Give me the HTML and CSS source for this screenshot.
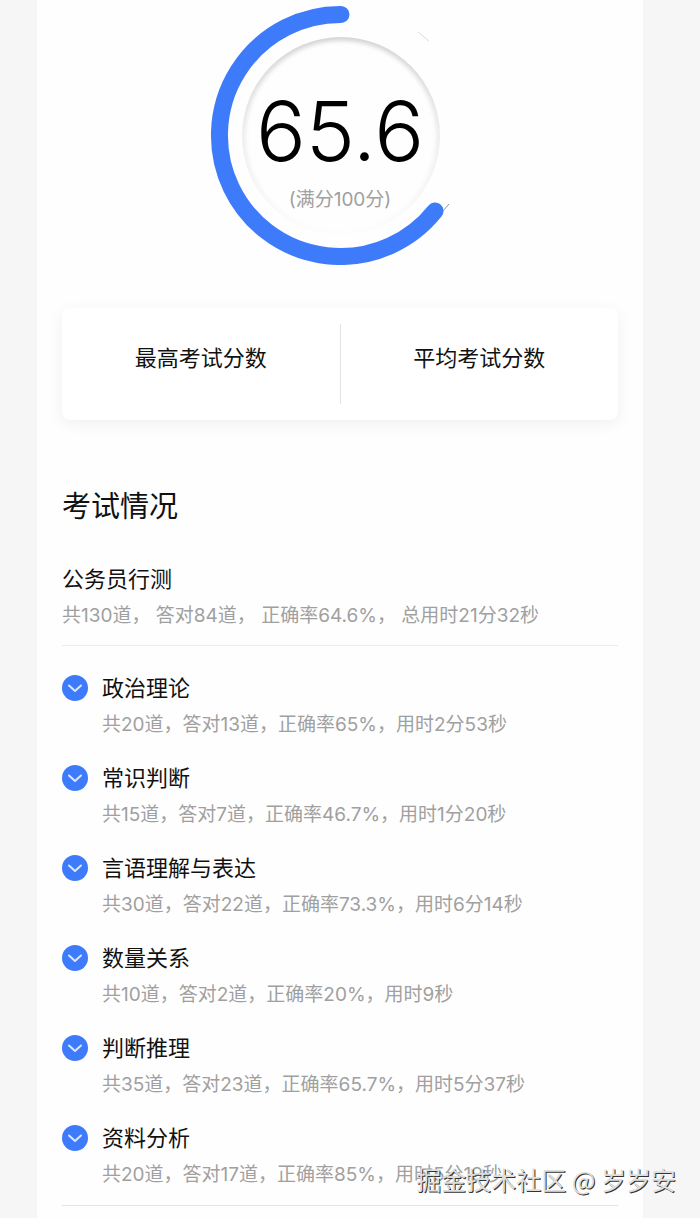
FILE: index.html
```
<!DOCTYPE html>
<html lang="zh-CN">
<head>
    <meta charset="UTF-8">
    <meta name="viewport" content="width=device-width, initial-scale=1.0">
    <title>考试情况</title>
    <link rel="stylesheet" href="styles.css">
</head>
<body>
<main class="sheet">
    <section class="gauge">
        <svg class="gauge-ring" viewBox="0 0 260 260" aria-hidden="true">
            <defs>
                <linearGradient id="rim" x1="0" y1="0" x2="0" y2="1">
                    <stop offset="0" stop-color="#d2d2d5"/>
                    <stop offset="0.5" stop-color="#ececed"/>
                    <stop offset="1" stop-color="#fdfdfd"/>
                </linearGradient>
                <filter id="soft" x="-10%" y="-10%" width="120%" height="120%">
                    <feGaussianBlur stdDeviation="2"/>
                </filter>
                <clipPath id="dial">
                    <circle cx="131" cy="131" r="99"/>
                </clipPath>
            </defs>
            <g clip-path="url(#dial)">
                <circle cx="131" cy="131" r="99" fill="none" stroke="url(#rim)" stroke-width="7" filter="url(#soft)"/>
            </g>
            <path d="M131 9.500A121 121 0 1 0 225 206" fill="none" stroke="#3d7bfb" stroke-width="17" stroke-linecap="round"/>
            <path d="M233 206l6-7" stroke="#8d95a3" stroke-width="1"/>
            <path d="M208 27l11 9" stroke="#dcdcdc" stroke-width="1"/>
        </svg>
        <div class="gauge-text">
            <div class="score">65.6</div>
            <div class="full-score">(满分100分)</div>
        </div>
    </section>

    <section class="summary">
        <div class="summary-item">最高考试分数</div>
        <div class="summary-item">平均考试分数</div>
    </section>

    <section class="result">
        <h1>考试情况</h1>
        <div class="subject">
            <h2>公务员行测</h2>
            <p>共130道， 答对84道， 正确率64.6%， 总用时21分32秒</p>
        </div>
        <ul class="modules">
            <li>
                <button class="toggle" aria-label="展开政治理论"><svg viewBox="0 0 26 26"><path d="M7 10.500l6 5.500 6-5.500"/></svg></button>
                <div>
                    <h2>政治理论</h2>
                    <p>共20道，答对13道，正确率65%，用时2分53秒</p>
                </div>
            </li>
            <li>
                <button class="toggle" aria-label="展开常识判断"><svg viewBox="0 0 26 26"><path d="M7 10.500l6 5.500 6-5.500"/></svg></button>
                <div>
                    <h2>常识判断</h2>
                    <p>共15道，答对7道，正确率46.7%，用时1分20秒</p>
                </div>
            </li>
            <li>
                <button class="toggle" aria-label="展开言语理解与表达"><svg viewBox="0 0 26 26"><path d="M7 10.500l6 5.500 6-5.500"/></svg></button>
                <div>
                    <h2>言语理解与表达</h2>
                    <p>共30道，答对22道，正确率73.3%，用时6分14秒</p>
                </div>
            </li>
            <li>
                <button class="toggle" aria-label="展开数量关系"><svg viewBox="0 0 26 26"><path d="M7 10.500l6 5.500 6-5.500"/></svg></button>
                <div>
                    <h2>数量关系</h2>
                    <p>共10道，答对2道，正确率20%，用时9秒</p>
                </div>
            </li>
            <li>
                <button class="toggle" aria-label="展开判断推理"><svg viewBox="0 0 26 26"><path d="M7 10.500l6 5.500 6-5.500"/></svg></button>
                <div>
                    <h2>判断推理</h2>
                    <p>共35道，答对23道，正确率65.7%，用时5分37秒</p>
                </div>
            </li>
            <li>
                <button class="toggle" aria-label="展开资料分析"><svg viewBox="0 0 26 26"><path d="M7 10.500l6 5.500 6-5.500"/></svg></button>
                <div>
                    <h2>资料分析</h2>
                    <p>共20道，答对17道，正确率85%，用时5分19秒</p>
                </div>
            </li>
        </ul>
    </section>
</main>
<div class="watermark">掘金技术社区 @ 岁岁安</div>
</body>
</html>
```

FILE: styles.css
```
* {
    box-sizing: border-box;
    margin: 0;
    padding: 0;
}

body {
    position: relative;
    min-height: 100vh;
    background-color: #f6f6f6;
    color: #111;
    font-family: Inter, "Noto Sans CJK SC", sans-serif;
    font-size: 19px;
}

.sheet {
    min-height: 100vh;
    margin: 0 57px 0 37px;
    padding: 5px 25px 12px;
    background-color: #fefefe;
}

.gauge {
    display: grid;
    justify-content: center;
}

.gauge-ring,
.gauge-text {
    grid-area: 1 / 1;
}

.gauge-ring {
    width: 260px;
    height: 260px;
}

.gauge-text {
    padding-top: 76px;
    text-align: center;
}

.score {
    color: #000;
    font-size: 83px;
    font-weight: 300;
    line-height: 100px;
}

.full-score {
    color: #a0a0a0;
    line-height: 38px;
}

.summary {
    display: flex;
    margin-top: 43px;
    padding: 16px 0;
    border-radius: 8px;
    background-color: #fff;
    box-shadow: 0 4px 16px rgba(0, 0, 0, 0.06);
}

.summary-item {
    flex: 1;
    height: 80px;
    padding-top: 16px;
    font-size: 22px;
    line-height: 36px;
    text-align: center;
}

.summary-item + .summary-item {
    border-left: 1px solid #e4e4e4;
}

h1 {
    margin-top: 65px;
    font-size: 29px;
    font-weight: 400;
    line-height: 44px;
}

h2 {
    font-size: 22px;
    font-weight: 400;
    line-height: 36px;
}

p {
    color: #a0a0a0;
    line-height: 38px;
}

.subject {
    padding: 32px 0 10px;
    border-bottom: 1px solid #ececec;
}

.modules {
    display: flex;
    flex-direction: column;
    gap: 16px;
    padding: 24px 0 11px;
    border-bottom: 1px solid #e4e4e4;
    list-style: none;
}

.modules li {
    display: flex;
    align-items: flex-start;
    gap: 14px;
}

.toggle {
    width: 26px;
    height: 26px;
    margin-top: 5px;
    border: none;
    border-radius: 50%;
    background-color: #3d7bfb;
    cursor: pointer;
}

.toggle svg {
    display: block;
    fill: none;
    stroke: #dbe7ff;
    stroke-width: 2;
    stroke-linecap: round;
    stroke-linejoin: round;
}

.watermark {
    position: absolute;
    right: 24px;
    bottom: 21px;
    color: #dedede;
    font-family: "Noto Sans CJK SC", sans-serif;
    font-size: 25px;
    line-height: 36px;
    text-shadow: 1px 1px 0 #333;
}
```
